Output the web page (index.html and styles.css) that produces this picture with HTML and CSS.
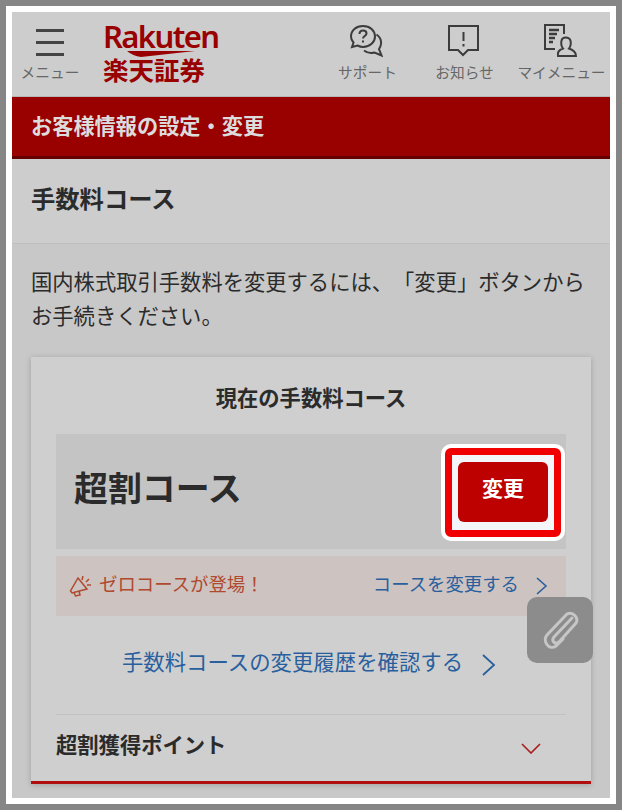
FILE: index.html

```html
<!DOCTYPE html>
<html lang="ja">
<head>
    <meta charset="UTF-8">
    <meta name="viewport" content="width=device-width, initial-scale=1.0">
    <title>手数料コース</title>
    <link rel="stylesheet" href="styles.css">
</head>
<body>
    <div class="frame">
        <div class="page">
            <header class="header">
                <div class="nav-item nav-menu">
                    <div class="burger"><span></span><span></span><span></span></div>
                    <div class="nav-label">メニュー</div>
                </div>
                <div class="logo">
                    <div class="logo-en">Rakuten</div>
                    <svg class="logo-swoosh" width="68" height="6" viewBox="0 0 68 6"><path d="M0 0H68L14 6Q6 5 0 0Z" fill="#990000"/></svg>
                    <div class="logo-ja">楽天証券</div>
                </div>
                <div class="nav-right">
                    <div class="nav-item">
                        <svg class="nav-icon" viewBox="0 0 34 34" fill="none" stroke="#3c3c3c" stroke-width="2">
                            <path d="M14 2C7 2 2 6.500 2 12.500C2 15 3 17 4.500 18.500L3 23L8.500 21.500C10.500 22.500 12 23 14 23C21 23 26 18 26 12.500C26 6.500 21 2 14 2Z"/>
                            <path d="M27.500 10.500C31 13 32.500 16 32 20C31.800 22 31 23.500 30 25L32.500 31.500L25.500 28.500C22 29.500 18 28.800 15 26.500"/>
                            <path d="M10.500 10C10.500 7.500 12 6.500 14 6.500C16 6.500 17.500 7.700 17.500 9.500C17.500 12 14 12 14 14.500"/>
                            <path d="M14 16.500V18.500"/>
                        </svg>
                        <div class="nav-label">サポート</div>
                    </div>
                    <div class="nav-item">
                        <svg class="nav-icon" viewBox="0 0 34 34" fill="none" stroke="#3c3c3c" stroke-width="2">
                            <path d="M3 2H32V26H22L17 31L12 26H3Z"/>
                            <path d="M17.500 8V17M17.500 20V22.500"/>
                        </svg>
                        <div class="nav-label">お知らせ</div>
                    </div>
                    <div class="nav-item">
                        <svg class="nav-icon nav-icon-my" viewBox="0 0 34 34" fill="none" stroke="#3c3c3c" stroke-width="2">
                            <path d="M20 10V1H1V25H11"/>
                            <path d="M5 6H15M5 10H13M5 14H11M5 18H9" stroke-width="2.500"/>
                            <path d="M14 32C13 27.500 16 25.500 19 24.500C17 22 17 19 17.500 16.500C18.500 12.500 25 12.500 26.500 16.500C27 19 27 22 25 24.500C28 25.500 32 27.500 32 32Z"/>
                        </svg>
                        <div class="nav-label">マイメニュー</div>
                    </div>
                </div>
            </header>

            <div class="red-bar">お客様情報の設定・変更</div>
            <h1 class="section-title">手数料コース</h1>

            <div class="content">
                <p class="lead">国内株式取引手数料を変更するには、「変更」ボタンからお手続きください。</p>

                <div class="card">
                    <div class="card-title">現在の手数料コース</div>
                    <div class="course-box">
                        <div class="course-name">超割コース</div>
                        <div class="btn-ring"><button class="btn-change">変更</button></div>
                    </div>
                    <div class="banner">
                        <div class="banner-left">
                            <svg width="24" height="24" viewBox="0 0 24 24" fill="none" stroke="#b0492e" stroke-width="1.500">
                                <path d="M9 4L18 15L3 19L1.500 17Z"/>
                                <path d="M5 18.500L6.500 22L11 21L10 17"/>
                                <path d="M14 2L13 6M20 5L17 8M22 11H18"/>
                            </svg>
                            <span>ゼロコースが登場！</span>
                        </div>
                        <a class="banner-link"><span>コースを変更する</span>
                            <svg width="13" height="18" viewBox="0 0 13 18" fill="none" stroke="#2a5f9e" stroke-width="1.600"><path d="M2 1L11 9L2 17"/></svg>
                        </a>
                    </div>
                    <a class="history-link"><span>手数料コースの変更履歴を確認する</span>
                        <svg width="15" height="22" viewBox="0 0 15 22" fill="none" stroke="#2a5f9e" stroke-width="1.800"><path d="M2 1L13 11L2 21"/></svg>
                    </a>
                    <div class="accordion">
                        <span>超割獲得ポイント</span>
                        <svg width="20" height="11" viewBox="0 0 20 11" fill="none" stroke="#a81c1c" stroke-width="1.600"><path d="M1 1L10 10L19 1"/></svg>
                    </div>
                </div>
            </div>

            <div class="clip-badge">
                <svg width="38" height="40" viewBox="0 0 38 40" fill="none" stroke="#c6c6c6" stroke-width="3" stroke-linecap="round">
                    <path d="M31 8L13 27C10 31 14 35 18 32L35 13C38 8 32 1 26 4L6 25C1 31 8 41 15 36L22 29"/>
                </svg>
            </div>
        </div>
    </div>
</body>
</html>
```

FILE: styles.css

```css
* {
    box-sizing: border-box;
}
body {
    margin: 0;
    font-family: "Noto Sans CJK JP", "Noto Sans", sans-serif;
    color: #2b2b2b;
    text-spacing-trim: space-all;
}
.frame {
    width: 622px;
    height: 810px;
    border: 6px solid #868686;
    background: #fff;
    padding: 6px;
}
.page {
    position: relative;
    height: 786px;
    overflow: hidden;
    background: #c8c8c8;
}

/* header */
.header {
    display: flex;
    height: 85px;
    background: #cdcdcd;
    border-bottom: 1px solid #b5b5b5;
}
.nav-item {
    display: flex;
    flex-direction: column;
    align-items: center;
    width: 97px;
    padding-top: 12px;
}
.nav-menu {
    width: 76px;
    padding-top: 17px;
}
.burger {
    display: flex;
    flex-direction: column;
    gap: 9px;
    width: 28px;
    margin-bottom: 6px;
}
.burger span {
    height: 3px;
    background: #444;
}
.nav-icon {
    width: 34px;
    height: 34px;
    margin: 0 3px 4px 0;
}
.nav-icon-my {
    margin-right: 1px;
}
.nav-label {
    font-size: 14.700px;
    line-height: 20px;
    color: #666;
    white-space: nowrap;
}
.logo {
    margin-left: 15px;
    padding-top: 9px;
    color: #990000;
}
.logo-en {
    font-family: "Noto Sans", sans-serif;
    font-size: 31px;
    font-weight: 600;
    line-height: 30px;
    letter-spacing: -1.600px;
}
.logo-swoosh {
    display: block;
    margin: 0 0 0 24px;
}
.logo-ja {
    font-size: 25.500px;
    font-weight: 700;
    line-height: 27px;
    margin-top: -2px;
}
.nav-right {
    display: flex;
    margin-left: auto;
}

.red-bar {
    height: 62px;
    padding-left: 19px;
    background: #990000;
    border-bottom: 3px solid #660000;
    color: #dcdcdc;
    font-size: 21.200px;
    font-weight: 700;
    line-height: 56px;
}
.section-title {
    height: 85px;
    margin: 0;
    padding-left: 19px;
    background: #cdcdcd;
    border-bottom: 1px solid #bfbfbf;
    font-size: 24.300px;
    font-weight: 700;
    line-height: 78px;
}

.content {
    padding: 20px 19px 0 19px;
}
.lead {
    margin: 0 0 25px;
    font-size: 21.300px;
    line-height: 34px;
}

/* card */
.card {
    padding: 0 25px;
    background: #cfcfcf;
    border-bottom: 3px solid #b00f0f;
    box-shadow: 0 1px 6px rgba(0, 0, 0, 0.2);
}
.card-title {
    height: 77px;
    padding-top: 23px;
    text-align: center;
    font-size: 21.300px;
    font-weight: 700;
    line-height: 34px;
}
.course-box {
    display: flex;
    align-items: center;
    justify-content: space-between;
    height: 115px;
    padding: 0 5px 0 18px;
    background: #c4c4c4;
}
.course-name {
    padding-bottom: 10px;
    font-size: 33.900px;
    font-weight: 700;
}
.btn-ring {
    margin-top: 2px;
    padding: 7px 6px 8px;
    background: #f4f5f8;
    border: 7px solid #f00000;
    border-radius: 6px;
    box-shadow: 0 0 0 4px #fff;
}
.btn-change {
    display: block;
    width: 90px;
    height: 60px;
    padding: 0 0 10px;
    border: none;
    border-radius: 6px;
    background: #bd0000;
    color: #fff;
    font-family: inherit;
    font-size: 21px;
    font-weight: 700;
}
.banner {
    display: flex;
    align-items: center;
    justify-content: space-between;
    height: 60px;
    margin-top: 7px;
    padding: 0 18px 0 13px;
    background: #cdc3c1;
    font-size: 18.400px;
}
.banner-left {
    display: flex;
    align-items: center;
    gap: 6px;
    color: #b0492e;
}
.banner-left span,
.banner-link span {
    padding-bottom: 7px;
}
.banner-link {
    display: flex;
    align-items: center;
    gap: 16px;
    color: #2a5f9e;
}
.history-link {
    display: flex;
    align-items: center;
    justify-content: center;
    gap: 18px;
    height: 99px;
    padding-right: 4px;
    border-bottom: 1px solid #c2c2c2;
    color: #2a5f9e;
    font-size: 21.400px;
}
.history-link span {
    padding-bottom: 9px;
}
.accordion {
    display: flex;
    align-items: center;
    justify-content: space-between;
    height: 66px;
    padding-right: 25px;
    font-size: 21.300px;
    font-weight: 700;
}
.accordion span {
    padding-bottom: 10px;
}

.clip-badge {
    position: absolute;
    top: 585px;
    left: 515px;
    display: flex;
    align-items: center;
    justify-content: center;
    width: 66px;
    height: 66px;
    border-radius: 10px;
    background: #8c8c8c;
}
```
